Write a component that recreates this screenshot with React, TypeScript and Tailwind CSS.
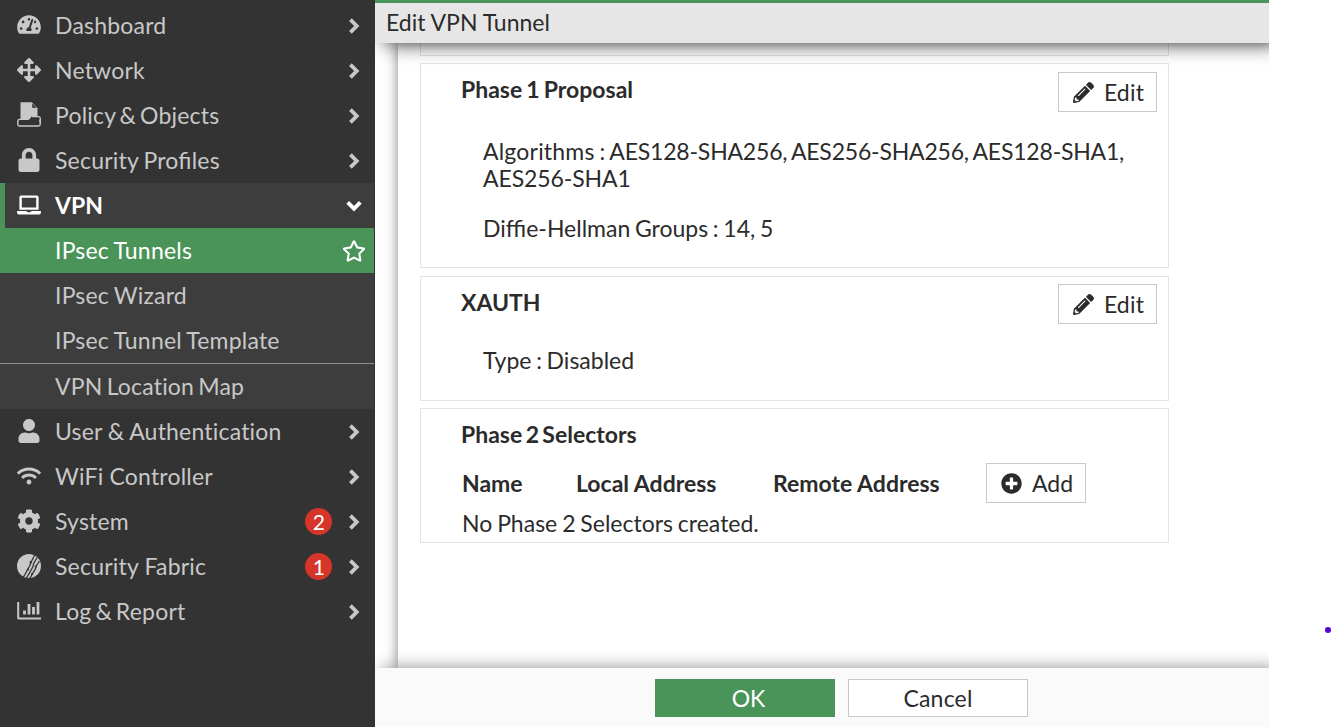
import React from 'react';
import { FaArrowsAlt, FaCog, FaLaptop, FaLock, FaPencilAlt, FaPlusCircle, FaRegStar, FaTachometerAlt, FaUser, FaWifi } from 'react-icons/fa';

const PolicyIcon = () => (
  <svg viewBox="0 0 24 25" className="h-[25px] w-6" fill="none">
    <path d="M2.5 17.4h19a1.7 1.7 0 0 1 1.7 1.7v3.2a1.7 1.7 0 0 1-1.7 1.7h-19a1.7 1.7 0 0 1-1.7-1.7v-3.2a1.7 1.7 0 0 1 1.7-1.7z" stroke="currentColor" strokeWidth="1.4" />
    <path d="M15 14.6h6.5a1.7 1.7 0 0 1 1.7 1.7v4" stroke="currentColor" strokeWidth="1.4" />
    <path d="M11 18.1h11.4v-2.2H14z" fill="#333333" />
    <path d="M3.5.3h11.2l5.8 5.9v8.4h-5c-2.4 0-1.6 2.9-4 2.9h-8z" fill="currentColor" />
    <path d="M15.6 2.2v3.2h3.2z" fill="#333333" stroke="#333333" strokeWidth="0.8" />
  </svg>
);

const FabricIcon = () => (
  <svg viewBox="0 0 24 24" className="size-6">
    <circle cx="12" cy="12" r="12" fill="currentColor" />
    <g fill="none" stroke="#333333" strokeWidth="1.3">
      <path d="M17.8 1 14 8.2l-1 3L6.5 23" />
      <path d="m20.3 3.5-3.6 5.8-.8 3.4L9.5 24" />
      <path d="m22.5 7-3 4.5-1 3.2L13 24" />
    </g>
    <g fill="#333333">
      <circle cx="13.6" cy="8.2" r="1.1" />
      <circle cx="11" cy="15.5" r="1.1" />
      <circle cx="18.8" cy="12.5" r="1.1" />
      <circle cx="15" cy="20" r="1.1" />
    </g>
  </svg>
);

const ReportIcon = () => (
  <svg viewBox="0 0 24 18" className="h-[18px] w-6" fill="none" stroke="currentColor">
    <path d="M1.2 0v15.9a.6.6 0 0 0 .6.6H24" strokeWidth="2" />
    <path d="M7.5 12.5v-4M12 12.5V2M16.5 12.5V5M21 12.5V0" strokeWidth="2.8" />
  </svg>
);

const menu = [
  { label: 'Dashboard', icon: <FaTachometerAlt className="h-[21px] w-6" /> },
  { label: 'Network', icon: <FaArrowsAlt className="size-6" /> },
  { label: 'Policy & Objects', icon: <PolicyIcon />, text: '[word-spacing:-2.2px]' },
  { label: 'Security Profiles', icon: <FaLock className="size-6" />, text: "[font-feature-settings:'liga'] [word-spacing:-1px]" },
  { label: 'VPN', icon: <FaLaptop className="h-5 w-6" />, open: true, text: 'tracking-normal' },
  { label: 'User & Authentication', icon: <FaUser className="size-6" />, text: '[word-spacing:-0.5px]' },
  { label: 'WiFi Controller', icon: <FaWifi className="size-6" /> },
  { label: 'System', icon: <FaCog className="size-6" />, badge: 2 },
  { label: 'Security Fabric', icon: <FabricIcon />, badge: 1 },
  { label: 'Log & Report', icon: <ReportIcon />, text: '[word-spacing:-2.2px]' }
];

function Chevron({ open }: { open?: boolean }) {
  return (
    <svg viewBox="0 0 16 16" className={open ? 'size-4 rotate-90' : 'size-4'} fill="none" stroke="currentColor" strokeWidth="3.8">
      <path d="m4.4 1.7 6.3 6.3-6.3 6.3" />
    </svg>
  );
}

function SubMenu() {
  return (
    <div className="mr-px bg-[#3d3d3d] [word-spacing:-1px]">
      <div className="flex h-[45px] items-center justify-between bg-[#4a9359] pr-2 pl-[55px] text-white">
        IPsec Tunnels
        <FaRegStar className="size-6" />
      </div>
      <div className="flex h-[45px] items-center pl-[55px]">IPsec Wizard</div>
      <div className="flex h-[45px] items-center pl-[55px]">IPsec Tunnel Template</div>
      <div className="flex h-[46px] items-center border-t border-[#8f8f8f] pl-[55px] [word-spacing:-2px]">VPN Location Map</div>
    </div>
  );
}

function Sidebar() {
  return (
    <nav className="w-[375px] shrink-0 bg-[#333333] pt-[3px] tracking-[0.2px] text-[#c8c8c8]">
      {menu.map((item) => (
        <div key={item.label}>
          <div
            className={
              item.open
                ? 'mr-px flex h-[45px] items-center border-l-[5px] border-[#4a9359] bg-[#3d3d3d] pr-3 pl-3 font-bold text-white'
                : 'mr-px flex h-[45px] items-center pr-3 pl-[17px]'
            }
          >
            <span className="mr-3.5 flex w-6 justify-center pb-0.5">{item.icon}</span>
            <span className={`flex-1 ${item.text ?? ''}`}>{item.label}</span>
            {item.badge && (
              <span className="mr-[14px] flex size-[27px] items-center justify-center rounded-full bg-[#d63529] pl-px text-[21px] text-white">
                {item.badge}
              </span>
            )}
            <Chevron open={item.open} />
          </div>
          {item.open && <SubMenu />}
        </div>
      ))}
    </nav>
  );
}

function EditButton() {
  return (
    <button className="flex h-10 w-[99px] items-center justify-center gap-2.5 border border-[#c8c8c8] bg-white pl-0.5 tracking-[0.2px]">
      <FaPencilAlt className="size-[21px]" />
      Edit
    </button>
  );
}

export default function App() {
  return (
    <div className="flex h-[727px] w-[1332px] overflow-hidden bg-white font-['Lato',sans-serif] text-[23px] leading-[27px] text-[#2b2b2b]">
      <Sidebar />
      <main className="flex w-[894px] flex-col overflow-hidden">
        <header className="z-10 flex h-[43px] shrink-0 items-center border-t-[3px] border-[#4a9359] bg-[#e6e6e6] pb-0.5 pl-[11px] shadow-[10px_0_20px_rgba(0,0,0,0.9)]">
          Edit VPN Tunnel
        </header>

        <div className="flex flex-1 bg-white pl-[23px]">
          <div className="flex-1 bg-white pl-[22px] shadow-[0_0_12px_rgba(0,0,0,0.5)]">
            <div className="mb-[7px] h-[13px] w-[749px] border border-t-0 border-[#e4e4e4]" />

            <section className="mb-2 h-[205px] w-[749px] border border-[#e4e4e4] pt-2 pr-[11px] pl-10">
              <div className="flex justify-between">
                <h2 className="pt-1 font-bold [word-spacing:-1.5px]">Phase 1 Proposal</h2>
                <EditButton />
              </div>
              <div className="mt-[26px] pl-[22px]">
                <div className="flex gap-1 whitespace-nowrap [word-spacing:-1.3px]">
                  <span className="tracking-[0.2px]">Algorithms :</span>
                  <span className="tracking-[-0.2px]">AES128-SHA256, AES256-SHA256, AES128-SHA1,</span>
                </div>
                <div className="tracking-[-0.1px]">AES256-SHA1</div>
              </div>
              <p className="mt-[23px] pl-[22px] [word-spacing:-1.2px]">Diffie-Hellman Groups : 14, 5</p>
            </section>

            <section className="mb-[7px] h-[125px] w-[749px] border border-[#e4e4e4] pt-[7px] pr-[11px] pl-10">
              <div className="flex justify-between">
                <h2 className="pt-[5px] font-bold">XAUTH</h2>
                <EditButton />
              </div>
              <p className="mt-[23px] pl-[22px] [word-spacing:-1.2px]">Type : Disabled</p>
            </section>

            <section className="h-[135px] w-[749px] border border-[#e4e4e4] pt-3 pl-10">
              <h2 className="font-bold [word-spacing:-2.2px]">Phase 2 Selectors</h2>
              <div className="mt-[15px] flex h-10 items-center pl-px font-bold">
                <span className="w-[114px]">Name</span>
                <span className="w-[197px]">Local Address</span>
                <span className="w-[213px]">Remote Address</span>
                <button className="flex h-10 w-[100px] items-center justify-center gap-2.5 border border-[#c8c8c8] bg-white pl-0.5 font-normal">
                  <FaPlusCircle className="size-[21px]" />
                  Add
                </button>
              </div>
              <p className="mt-[7px] pl-px [word-spacing:-1px]">No Phase 2 Selectors created.</p>
            </section>
          </div>
        </div>

        <footer className="z-10 flex h-[59px] shrink-0 items-start gap-[13px] bg-[#fafafa] pt-[11px] pl-[280px] shadow-[8px_0_16px_rgba(0,0,0,0.45)]">
          <button className="h-[38px] w-[180px] bg-[#4a9359] pl-[7px] text-white">OK</button>
          <button className="h-[38px] w-[180px] border border-[#c8c8c8] bg-white tracking-[0.2px]">Cancel</button>
        </footer>
      </main>
      <aside className="flex flex-1 items-end justify-end pr-px pb-[94px]">
        <span className="size-1.5 rounded-full bg-[#5b00d6]" />
      </aside>
    </div>
  );
}
